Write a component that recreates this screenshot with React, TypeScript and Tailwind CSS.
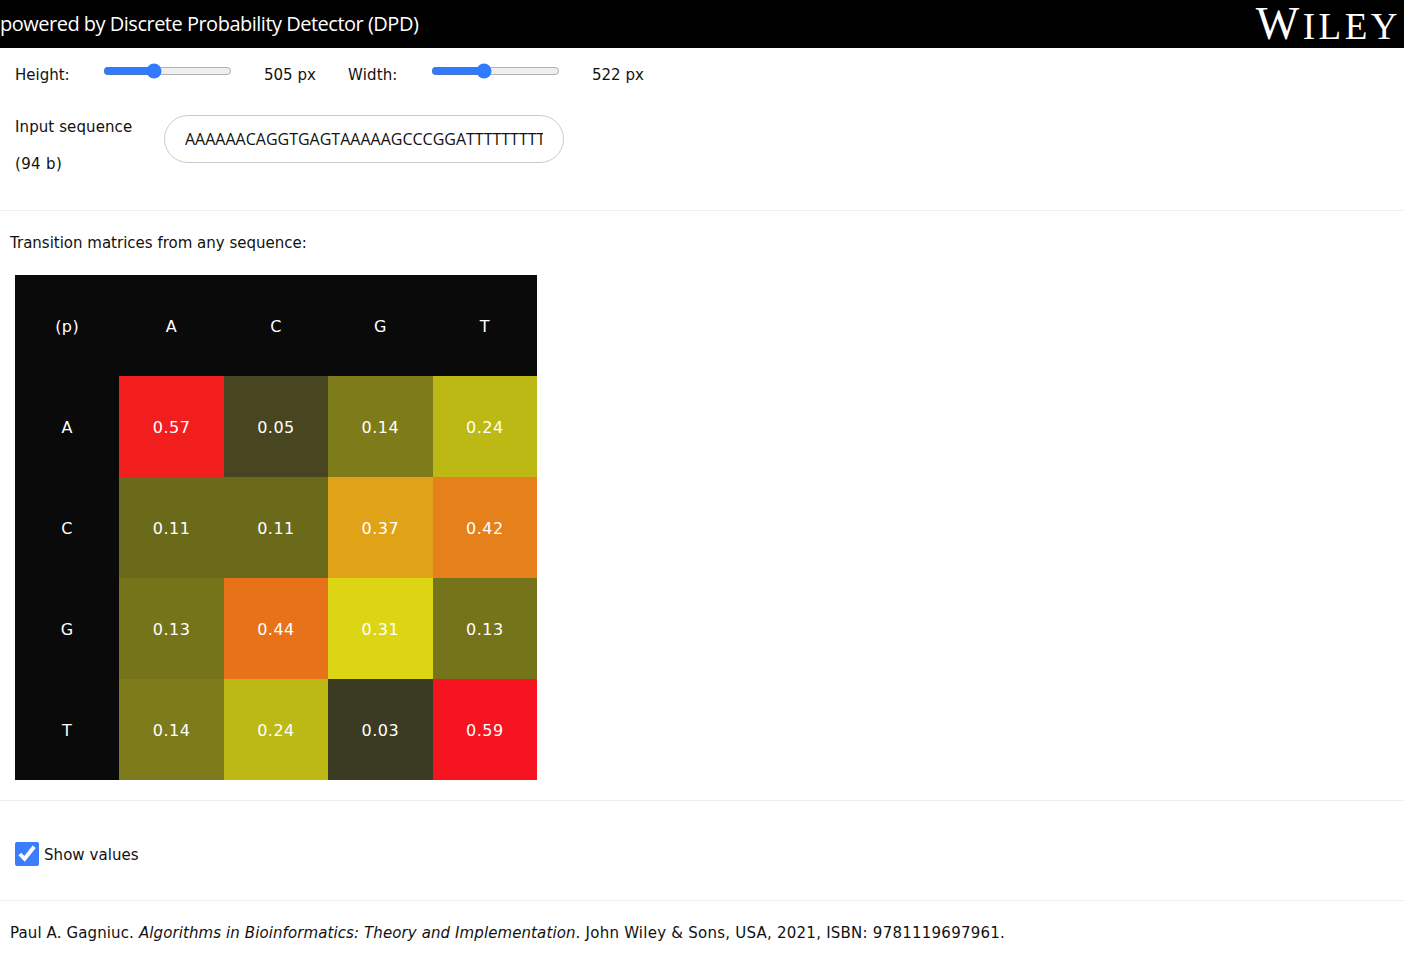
import React from "react";

const columns = ["(p)", "A", "C", "G", "T"];

const rows = [
  {
    label: "A",
    cells: [
      { value: "0.57", className: "bg-[#f21d1d]" },
      { value: "0.05", className: "bg-[#484620]" },
      { value: "0.14", className: "bg-[#7e7b1a]" },
      { value: "0.24", className: "bg-[#bcb914]" },
    ],
  },
  {
    label: "C",
    cells: [
      { value: "0.11", className: "bg-[#6b6a1b]" },
      { value: "0.11", className: "bg-[#6b6a1b]" },
      { value: "0.37", className: "bg-[#e0a317]" },
      { value: "0.42", className: "bg-[#e5801a]" },
    ],
  },
  {
    label: "G",
    cells: [
      { value: "0.13", className: "bg-[#76741a]" },
      { value: "0.44", className: "bg-[#e7721a]" },
      { value: "0.31", className: "bg-[#dcd513]" },
      { value: "0.13", className: "bg-[#76741a]" },
    ],
  },
  {
    label: "T",
    cells: [
      { value: "0.14", className: "bg-[#7e7b1a]" },
      { value: "0.24", className: "bg-[#bcb914]" },
      { value: "0.03", className: "bg-[#3b3a22]" },
      { value: "0.59", className: "bg-[#f5141f]" },
    ],
  },
];

const sequence =
  "AAAAAACAGGTGAGTAAAAAGCCCGGATTTTTTTTTTTTTTTTTTTTTTTTTAAAAAAAGGCCCTTTAAAGGGCCCAAATTTGGGCCCAAATTTGG";

const Slider = ({ value }: { value: number }) => (
  <input
    type="range"
    min={150}
    max={1089}
    defaultValue={value}
    className="w-[129px] mx-0.5 mb-2.5 accent-[#2f7aff]"
  />
);

const Cell = ({ children, className }: { children: React.ReactNode; className: string }) => (
  <div className={`flex items-center justify-center pt-0.5 text-white text-[16px] tracking-[0.5px] ${className}`}>
    {children}
  </div>
);

export default function App() {
  return (
    <div className="min-h-[962px] bg-white text-[15px] text-[#111] font-['DejaVu_Sans',sans-serif]">
      <header className="h-12 bg-black text-white flex items-center justify-between">
        <span className="text-[20px] font-['Open_Sans',sans-serif] tracking-[-0.5px]">
          powered by Discrete Probability Detector (DPD)
        </span>
        <span className="mr-[3px] font-['Liberation_Serif',serif] text-[37px] leading-none tracking-[3.5px]">
          <span className="text-[46px]">W</span>ILEY
        </span>
      </header>

      <section className="h-[163px] border-b border-[#eeeeee] pl-[15px]">
        <div className="flex items-center h-[53px] pt-0.5">
          <span className="w-[86px]">Height:</span>
          <Slider value={505} />
          <span className="ml-[30px] w-[84px]">505 px</span>
          <span className="w-[81px] tracking-[0.15px]">Width:</span>
          <Slider value={522} />
          <span className="ml-[30px]">522 px</span>
        </div>
        <div className="flex items-start mt-[14px]">
          <div className="w-[149px] pt-px flex flex-col gap-[14.5px] tracking-[0.1px]">
            <span>Input sequence</span>
            <span className="tracking-[0.35px]">(94 b)</span>
          </div>
          <input
            readOnly
            value={sequence}
            className="w-[400px] h-12 rounded-full border border-[#cccccc] px-5 text-[16px] text-[#111] font-['Open_Sans',sans-serif] outline-none"
          />
        </div>
      </section>

      <p className="pl-[10px] pt-[22px] leading-[20px]">Transition matrices from any sequence:</p>

      <div className="ml-[15px] mt-[22px] w-[522px] h-[505px] grid grid-cols-5 grid-rows-5 bg-[#0a0a0a]">
        {columns.map((column) => (
          <Cell key={column} className="">
            {column}
          </Cell>
        ))}
        {rows.map((row) => (
          <React.Fragment key={row.label}>
            <Cell className="">{row.label}</Cell>
            {row.cells.map((cell, index) => (
              <Cell key={index} className={cell.className}>
                {cell.value}
              </Cell>
            ))}
          </React.Fragment>
        ))}
      </div>

      <div className="mt-5 h-[101px] border-y border-[#eeeeee] pl-[15px] pt-1.5 flex items-center gap-[5px]">
        <input type="checkbox" defaultChecked className="w-6 h-6 m-0 accent-[#3b7dfa]" />
        <label className="pt-1 tracking-[0.05px]">Show values</label>
      </div>

      <p className="pl-[10px] pt-[22px] leading-[20px]">
        <span className="tracking-[0.12px]">Paul A. Gagniuc. </span>
        <em className="tracking-[0.1px]">Algorithms in Bioinformatics: Theory and Implementation</em>
        <span className="tracking-[0.24px]">. John Wiley &amp; Sons, USA, 2021, ISBN: 9781119697961.</span>
      </p>
    </div>
  );
}
